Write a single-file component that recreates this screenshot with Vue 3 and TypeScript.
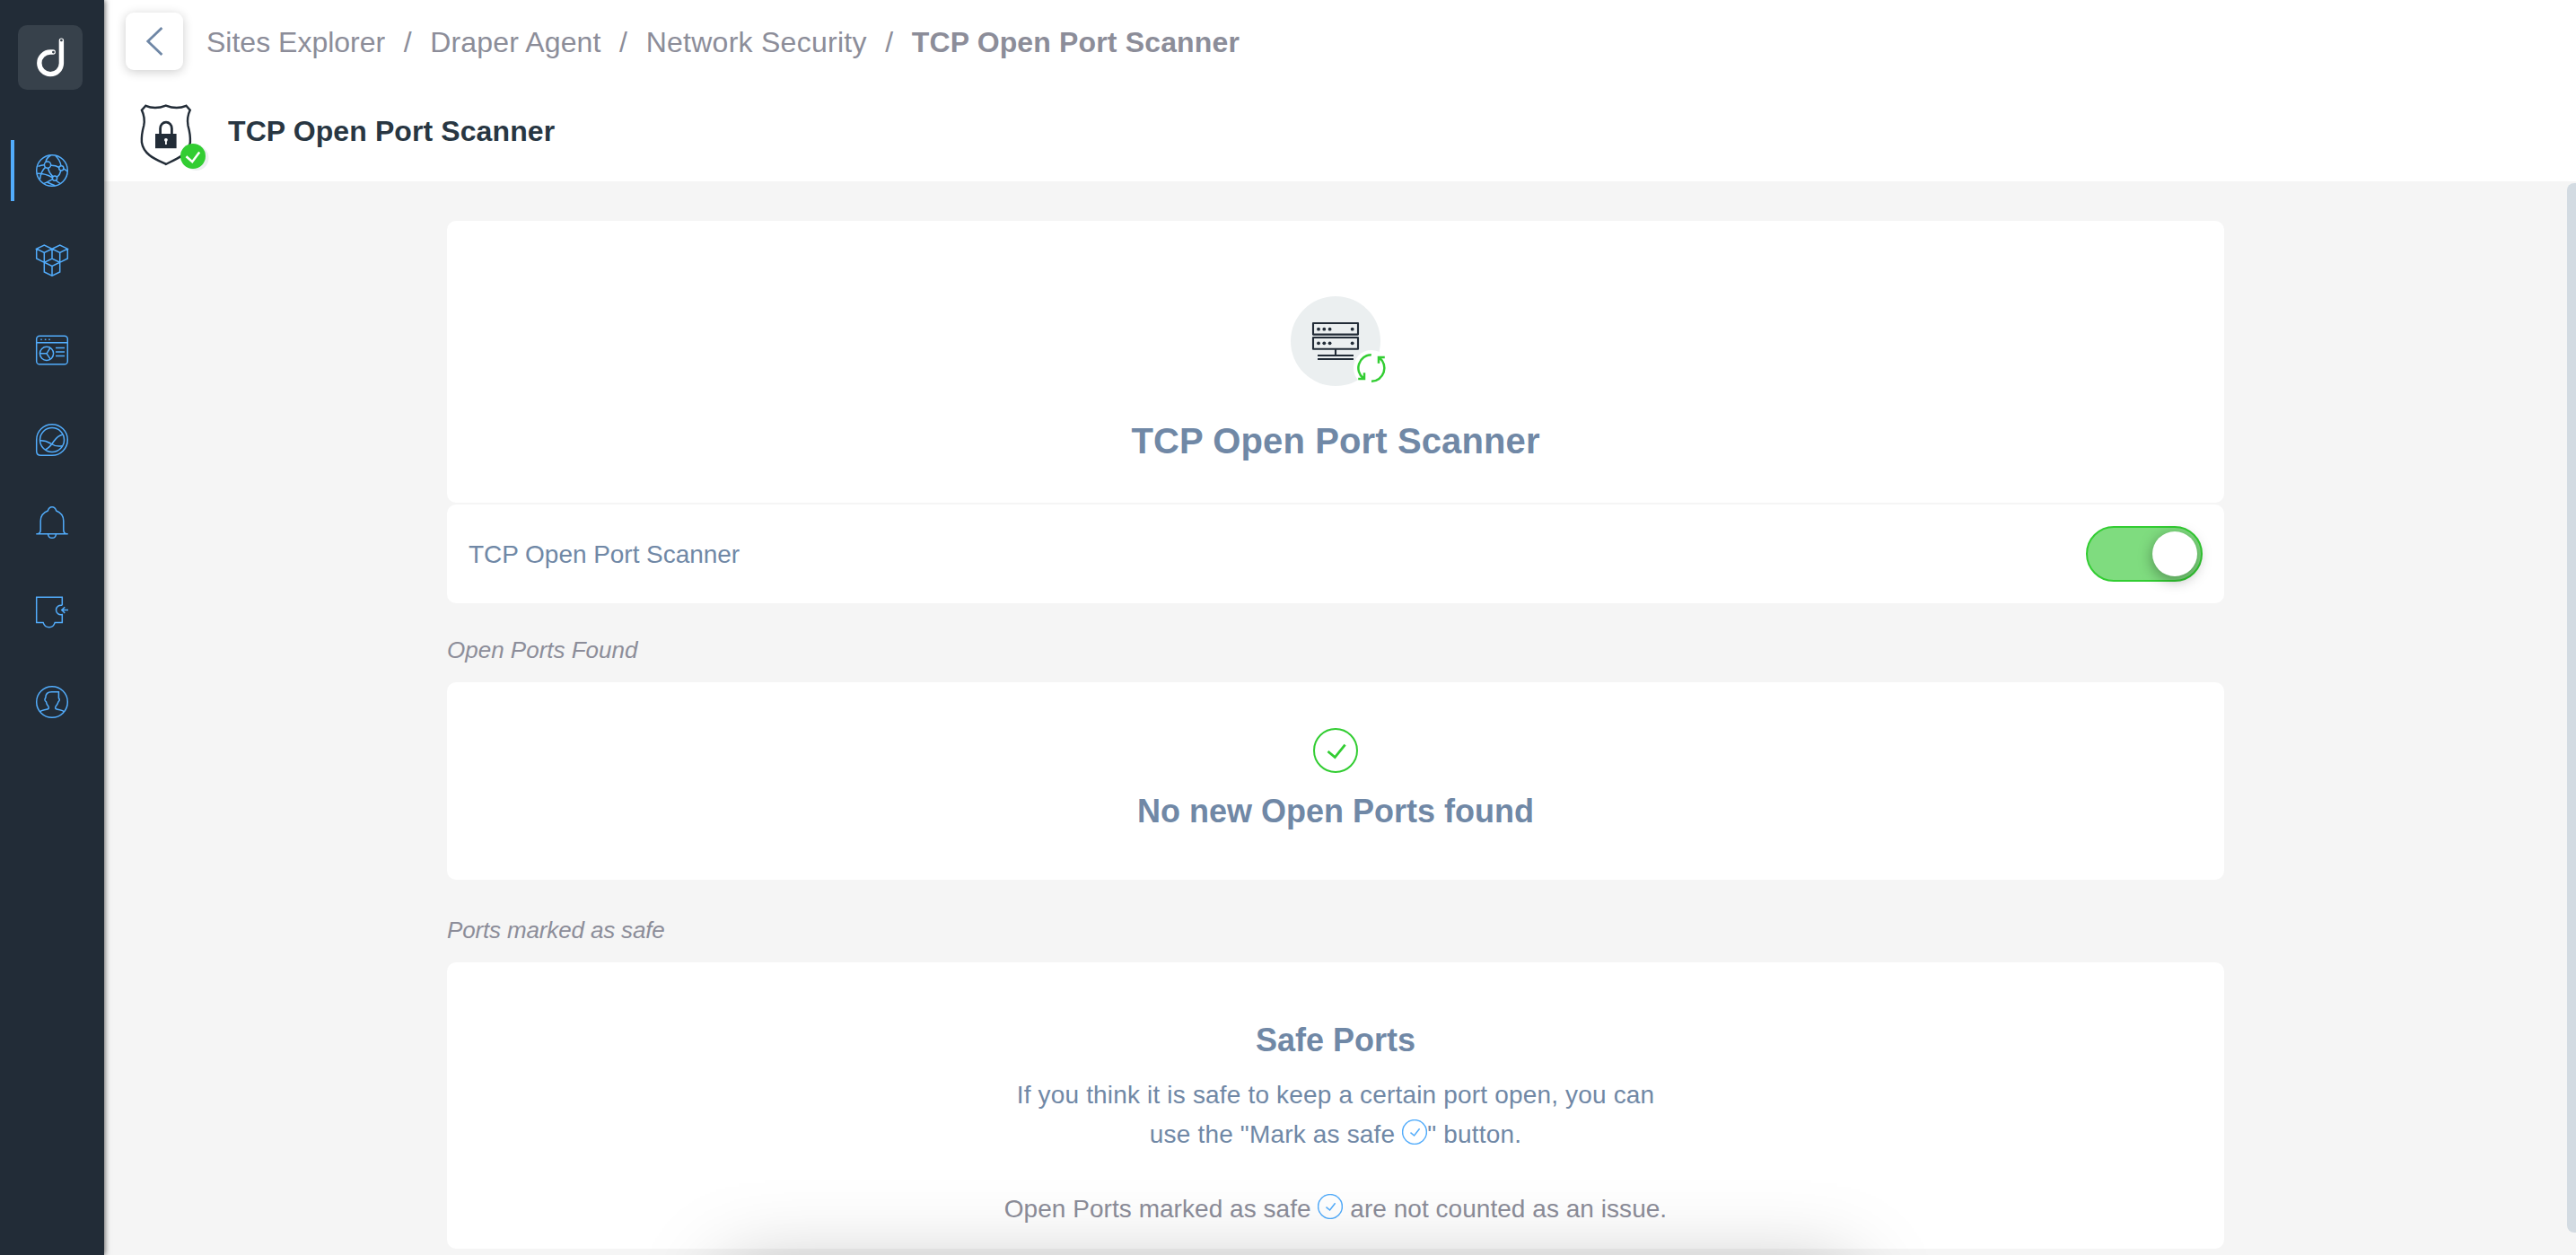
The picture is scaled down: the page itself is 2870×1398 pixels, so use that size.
<script setup lang="ts">
import { ref } from 'vue'

const crumbs = ['Sites Explorer', 'Draper Agent', 'Network Security']
const current = 'TCP Open Port Scanner'
const enabled = ref(true)
</script>

<template>
  <div class="app">
    <nav class="sidebar">
      <div class="logo">
        <svg width="72" height="72" viewBox="0 0 72 72" fill="none" stroke="#fff" stroke-width="5.4" stroke-linecap="round">
          <path d="M48.4 17.2V42.4A12.3 12.3 0 1 1 36.1 30H39.2" />
          <circle cx="48.4" cy="16.9" r="1.4" fill="#37414b" stroke="none" />
          <circle cx="39.4" cy="30.1" r="1.4" fill="#37414b" stroke="none" />
        </svg>
      </div>
      <a class="item active">
        <svg width="36" height="36" viewBox="0 0 36 36">
          <circle cx="18" cy="18" r="17.3" />
          <circle cx="13" cy="11.6" r="3.6" /><circle cx="28.3" cy="15.3" r="2.6" /><circle cx="21" cy="26.6" r="2.6" />
          <path d="M2.4 13.4Q6 11.8 9.4 11.8M11 8.5Q11.5 4 16.5 1M16.4 12.2Q22 12 25.8 14.5M10.6 14.3Q5.5 18.5 4.6 27.5M13.4 15.2Q14.5 20.5 19 24.9M1 21.4Q10 21 18.5 25.8M23.4 25.5Q27 22.5 27.9 18M22.4 28.9Q23.6 30.6 27 32.4M18.6 27.6Q12.5 31 8.6 32.6M12.6 31Q17 33 21.3 34.8M21.8 1.5Q26.8 6 28 12.7M30.8 16Q33.6 17.2 34.9 19" />
        </svg>
      </a>
      <a class="item">
        <svg width="36" height="36" viewBox="0 0 36 36">
          <path d="M.7 5.2L9.3 1L18 5.2L9.3 9.5ZM18 5.2L26.7 1L35.3 5.2L26.7 9.5ZM.7 5.2V16L9.3 20.3V9.5M35.3 5.2V16L26.7 20.3V9.5M18 5.2V16M9.3 20.3L18 16L26.7 20.3L18 24.5ZM9.3 20.3V31L18 35.2L26.7 31V20.3M18 24.5V35" />
        </svg>
      </a>
      <a class="item">
        <svg width="36" height="36" viewBox="0 0 36 36">
          <rect x=".7" y="2.2" width="34.6" height="31.6" rx="3.4" />
          <path d="M.7 9.7H35.3M5.2 6.2H6.8M9.8 6.2H11.4M14.2 6.2H15.8M22 15.6H32M22 20.1H32M22 24.4H32" />
          <circle cx="12" cy="21.8" r="7.6" />
          <path d="M4.4 21.8H12L16 15.4M12 21.8L16.2 28.1" />
        </svg>
      </a>
      <a class="item">
        <svg width="36" height="36" viewBox="0 0 36 36">
          <path d="M18 .7A17.3 17.3 0 0 1 18 35.3H5.5Q.7 35.3 .7 30.5V18A17.3 17.3 0 0 1 18 .7Z" />
          <circle cx="18" cy="18" r="13.5" />
          <path d="M4.6 18.7Q11 18.5 16.5 22Q22 26 29.2 24.7M10.5 29Q15.5 26.5 20 19.5Q24.5 13.2 30 12" />
        </svg>
      </a>
      <a class="item bell">
        <svg width="36" height="36" viewBox="0 0 36 36">
          <path d="M.3 30.8H35.7M2.4 30.6Q5.2 29.5 5.2 26.4V16.2Q5.2 8.2 13.3 5Q14.5 .7 18 .7T22.7 5Q30.8 8.2 30.8 16.2V26.4Q30.8 29.5 33.6 30.6M13.5 31Q14 35.3 18 35.3T22.5 31" />
        </svg>
      </a>
      <a class="item">
        <svg width="36" height="36" viewBox="0 0 36 36">
          <path d="M29.3 10.3V1.3H.7V29.4H8.1C9 32.5 11.5 34.8 14.8 34.8S20.3 32.5 21.2 29.4H29.3V20.6C25.5 21.2 22.5 19 22.5 15.5S25.5 9.8 29.3 10.3" />
          <path d="M36 15.6H29.4M32.2 12.3L28.8 15.6L32.2 18.9" />
        </svg>
      </a>
      <a class="item">
        <svg width="36" height="36" viewBox="0 0 36 36">
          <circle cx="18" cy="18" r="17.3" />
          <path d="M4.6 28.8C6.5 26.5 10 27.2 13.5 25.8Q15 25 13.8 22.8Q11.8 20.5 11.4 17.7Q8.8 16 10.8 13.2C10.8 9 13.5 6.8 17.5 6.8H25.4V13.6Q27.4 15.5 25 17.7Q24 20.8 22.2 22.8Q21 25 22.5 25.8C26 27.2 29.5 26.5 31.4 28.8" />
        </svg>
      </a>
    </nav>

    <div class="main">
      <header class="header">
        <div class="crumb-row">
          <button class="back">
            <svg width="64" height="64" viewBox="0 0 64 64" fill="none" stroke="#6f87a6" stroke-width="2.8">
              <path d="M40.4 17L24.8 32L40.4 47" />
            </svg>
          </button>
          <div class="crumbs">
            <template v-for="c in crumbs" :key="c">
              <span>{{ c }}</span><span class="sep">/</span>
            </template>
            <b>{{ current }}</b>
          </div>
        </div>
        <div class="title-row">
          <svg class="shield" width="80" height="76" viewBox="0 0 80 76" fill="none">
            <path d="M8.4 1.8Q18.5 6.4 30.8 1.6Q43 6.4 53.4 1.8L57.8 6.6Q53.8 15 55.5 24Q58.3 34 57.9 42.5C56 56.5 42 61.5 30.8 66.8C19.5 61.5 6 56.5 3.9 42.5Q3.4 34 6.2 24Q8 15 3.9 6.6Z" stroke="#222c37" stroke-width="2.4" />
            <path d="M24.6 34V27A6.4 6.9 0 0 1 37.4 27V34" stroke="#222c37" stroke-width="2.8" />
            <rect x="19" y="33" width="23.6" height="16.2" fill="#222c37" />
            <circle cx="30.9" cy="39.8" r="1.9" fill="#fff" /><path d="M30.9 40V45" stroke="#fff" stroke-width="1.8" />
            <circle cx="64.5" cy="60" r="14" fill="#eceff0" />
            <circle cx="61" cy="58" r="14" fill="#32cd32" />
            <path d="M53.5 58.3L60.2 64.2L68.2 53.5" stroke="#fff" stroke-width="2.5" />
          </svg>
          <h1>{{ current }}</h1>
        </div>
      </header>

      <main class="scroll">
        <div class="column">
          <section class="card hero">
            <svg width="112" height="100" viewBox="0 0 112 100" fill="none">
              <circle cx="50" cy="50" r="50" fill="#ebeff0" />
              <g stroke="#222c37" stroke-width="2.1" stroke-linejoin="round">
                <rect x="25" y="30" width="50" height="12.6" /><rect x="25" y="46" width="50" height="12.8" />
                <path d="M50 59V66M30 66H70M30 70H70" />
              </g>
              <g fill="#222c37">
                <circle v-for="x in [31, 37.3, 43.6, 68.7]" :key="x" :cx="x" cy="36.7" r="1.9" />
                <circle v-for="x in [31, 37.3, 43.6, 68.7]" :key="x" :cx="x" cy="52.3" r="1.9" />
              </g>
              <circle cx="90" cy="80" r="20" fill="#fff" />
              <g stroke="#32cd32" stroke-width="2.5">
                <path d="M89.8 65.2A14.8 14.8 0 0 0 81 91.6M75.2 92H82V85.2" />
                <path d="M90 94.8A14.8 14.8 0 0 0 98.8 68.4M104.8 68H98V74.8" />
              </g>
            </svg>
            <h2>{{ current }}</h2>
          </section>
          <section class="card row">
            <span>{{ current }}</span>
            <div class="toggle" :class="{ on: enabled }" @click="enabled = !enabled"><i /></div>
          </section>

          <p class="label">Open Ports Found</p>
          <section class="card found">
            <svg width="50" height="50" viewBox="0 0 50 50" fill="none" stroke="#32cd32">
              <circle cx="25" cy="25" r="24" stroke-width="2" />
              <path d="M16.5 26L24.3 32.6L35.6 18.6" stroke-width="2.8" />
            </svg>
            <h3>No new Open Ports found</h3>
          </section>

          <p class="label safe-label">Ports marked as safe</p>
          <section class="card safe">
            <h3>Safe Ports</h3>
            <p class="hint">If you think it is safe to keep a certain port open, you can<br />use the "Mark as safe <svg class="ck" viewBox="0 0 28 28"><circle cx="14" cy="14" r="13.4" /><path d="M9.5 14.6L13.6 18L19.6 10.3" /></svg>" button.</p>
            <p class="note">Open Ports marked as safe <svg class="ck" viewBox="0 0 28 28"><circle cx="14" cy="14" r="13.4" /><path d="M9.5 14.6L13.6 18L19.6 10.3" /></svg> are not counted as an issue.</p>
          </section>
        </div>
        <div class="track"><div class="thumb" /></div>
      </main>
    </div>
    <div class="dock-shadow" />
  </div>
</template>

<style>
body { margin: 0; overflow: hidden; }
</style>

<style scoped>
* { box-sizing: border-box; }
.app {
  position: relative;
  display: flex;
  width: 100vw;
  height: 1398px;
  overflow: hidden;
  background: #f5f5f5;
  font-family: "Liberation Sans", Arial, sans-serif;
}
svg { display: block; }
h1, h2, h3, p { margin: 0; }
.sidebar {
  position: relative;
  z-index: 2;
  display: flex;
  flex-direction: column;
  align-items: center;
  width: 116px;
  padding-top: 28px;
  background: #222c37;
  box-shadow: 1px 0 6px rgba(0, 0, 0, .6);
}
.logo {
  width: 72px;
  height: 72px;
  margin: 0 4px 56px 0;
  border-radius: 10px;
  background: #37414b;
}
.item {
  display: flex;
  align-items: center;
  justify-content: center;
  width: 92px;
  height: 68px;
  margin-bottom: 32px;
}
.item svg { fill: none; stroke: #52acfb; stroke-width: 1.5; overflow: visible; }
.active { border-left: 4px solid #52acfb; padding-right: 4px; }
.bell { margin-top: -8px; }
.main { flex: 1; display: flex; flex-direction: column; min-width: 0; }
.header { height: 202px; background: #fff; }
.crumb-row { display: flex; align-items: center; padding: 14px 0 0 24px; }
.back {
  width: 64px;
  height: 64px;
  padding: 0;
  border: 0;
  border-radius: 9px;
  background: #fff;
  box-shadow: 0 2px 12px rgba(0, 0, 0, .2);
}
.crumbs { display: flex; padding: 2px 0 0 26px; color: #8c8d99; font-size: 32px; line-height: 40px; letter-spacing: .15px; white-space: nowrap; }
.crumbs span:first-child { letter-spacing: 0; }
.crumbs span:nth-child(5) { letter-spacing: .26px; }
.sep { padding: 0 20.5px; }
.title-row { display: flex; align-items: center; padding: 38px 0 0 38px; }
.title-row h1 { margin: -16px 0 0 20px; color: #283642; font-size: 32px; line-height: 40px; letter-spacing: .1px; }
.scroll { flex: 1; display: flex; min-height: 0; }
.column { width: 1980px; margin: 0 auto; padding-top: 44px; }
.card { border-radius: 10px; background: #fff; color: #7088a6; }
.hero { display: flex; flex-direction: column; align-items: center; height: 314px; padding-top: 84px; }
.hero svg { margin-left: 12px; }
.hero h2 { margin-top: 37px; font-size: 40px; line-height: 48px; letter-spacing: .12px; }
.row { display: flex; align-items: center; justify-content: space-between; height: 110px; margin-top: 2px; padding: 0 24px; font-size: 28px; }
.row span { margin-top: 1px; letter-spacing: -.04px; }
.toggle { display: flex; width: 130px; height: 62px; padding: 4px; border: 2px solid #ccc; border-radius: 31px; background: #eee; }
.toggle.on { justify-content: flex-end; border-color: #32cd32; background: #7fdc7f; }
.toggle i { width: 50px; height: 50px; border-radius: 50%; background: #fff; box-shadow: 0 4px 16px rgba(0, 0, 0, .36); }
.label { height: 88px; padding-top: 36px; color: #8c8d99; font-size: 26px; font-style: italic; line-height: 32px; }
.found { display: flex; flex-direction: column; align-items: center; height: 220px; padding-top: 51px; }
.found h3, .safe h3 { font-size: 36px; line-height: 44px; }
.found h3 { margin-top: 21px; }
.safe-label { height: 92px; padding-top: 40px; letter-spacing: -.15px; }
.safe { height: 319px; padding-top: 65px; text-align: center; }
.hint, .note { font-size: 28px; line-height: 44px; }
.hint { margin-top: 17px; letter-spacing: .17px; }
.note { margin-top: 39px; color: #8c8d99; letter-spacing: .04px; }
.ck { display: inline-block; width: 28px; height: 28px; margin-bottom: -2px; vertical-align: baseline; fill: none; stroke: #52acfb; stroke-width: 1.5; }
.track { width: 10px; }
.thumb { height: 1169px; margin-top: 2px; border-radius: 8px 0 0 8px; background: #d3dbe2; }
.dock-shadow {
  position: absolute;
  z-index: 3;
  top: 1414px;
  left: 808px;
  width: 1254px;
  height: 300px;
  box-shadow: 0 0 88px rgba(0, 0, 0, .26);
}
</style>
